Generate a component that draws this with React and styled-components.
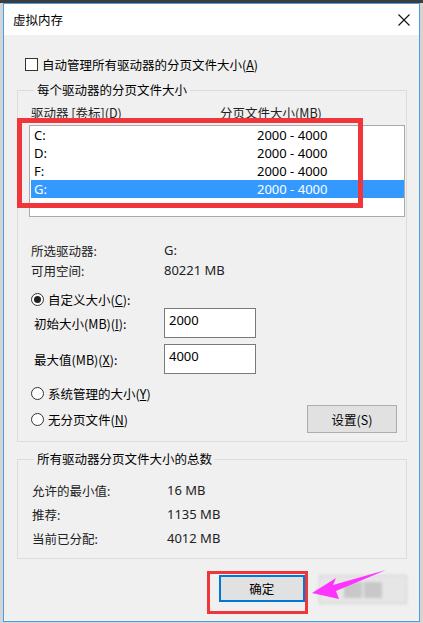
import React from 'react'
import styled, { createGlobalStyle } from 'styled-components'

const Global = createGlobalStyle`
  html, body {
    margin: 0;
    padding: 0;
    background: #d4d4d4;
  }
  body {
    font-family: "Noto Sans", "Noto Sans CJK SC", sans-serif;
    font-size: 12.5px;
    color: #000;
  }
`

const Screen = styled.div`
  width: 423px;
  height: 623px;
  box-sizing: border-box;
  border-top: 3px solid #3d3d3d;
  padding: 0 3px 0 3px;
  background: #d4d4d4;
`

const Window = styled.div`
  position: relative;
  width: 417px;
  height: 619px;
  box-sizing: border-box;
  border: 1px solid #4a9ee3;
  background: #f0f0f0;
  display: flex;
  flex-direction: column;
  overflow: hidden;
`

const TitleBar = styled.div`
  height: 31px;
  background: #fff;
  display: flex;
  align-items: center;
  justify-content: space-between;
  padding: 0 9px 0 9px;
  font-family: "Noto Sans CJK SC", sans-serif;
`

const Body = styled.div`
  flex: 1;
  padding: 21px 12px 0 13px;
  display: flex;
  flex-direction: column;
`

const CheckRow = styled.label`
  display: flex;
  align-items: center;
  height: 16px;
  padding-left: 8px;
  gap: 4px;
  font-family: "Noto Sans CJK SC", sans-serif;
`

const CheckBox = styled.span`
  width: 11px;
  height: 11px;
  border: 1px solid #333;
  background: #fff;
`

const Group = styled.fieldset`
  margin: ${(p) => p.$top}px 0 0 0;
  padding: ${(p) => p.$pt}px 1px ${(p) => p.$pb}px 11px;
  border: 1px solid #dcdcdc;
  min-width: 0;
`

const Legend = styled.legend`
  padding: 0 3px;
  margin-left: 5px;
  line-height: 16px;
  font-family: "Noto Sans CJK SC", sans-serif;
`

const HeaderRow = styled.div`
  display: grid;
  grid-template-columns: 189px auto;
  height: 16px;
  line-height: 16px;
  padding-left: 2px;
  color: #222;
  font-family: "Noto Sans CJK SC", sans-serif;
`

const ListBox = styled.div`
  margin-top: 4px;
  height: 92px;
  box-sizing: border-box;
  border: 1px solid #a9a9a9;
  background: #fff;
`

const ListRow = styled.div`
  display: grid;
  grid-template-columns: 223px auto;
  height: 18px;
  line-height: 18px;
  padding-left: 3px;
  margin-left: 1px;
  font-size: 13px;
  background: ${(p) => (p.$selected ? '#3399ff' : 'transparent')};
  color: ${(p) => (p.$selected ? '#fff' : '#000')};
`

const InfoRow = styled.div`
  display: grid;
  grid-template-columns: ${(p) => p.$col}px auto;
  height: ${(p) => p.$h}px;
  align-items: center;
  padding-left: ${(p) => p.$indent}px;
  margin-top: ${(p) => p.$top || 0}px;
  font-family: "Noto Sans", "Noto Sans CJK SC", sans-serif;
  color: #222;
`

const Num = styled.span`
  font-size: 13px;
`

const RadioRow = styled.label`
  display: flex;
  align-items: center;
  gap: 4px;
  height: 18px;
  padding-left: 2px;
  margin-top: ${(p) => p.$top || 0}px;
  font-family: "Noto Sans CJK SC", sans-serif;
`

const Radio = styled.span`
  width: 11px;
  height: 11px;
  border-radius: 50%;
  border: 1px solid #333;
  background: #fff;
  display: flex;
  align-items: center;
  justify-content: center;

  &::after {
    content: '';
    width: 7px;
    height: 7px;
    border-radius: 50%;
    background: ${(p) => (p.$checked ? '#222' : 'transparent')};
  }
`

const FieldRow = styled.div`
  display: grid;
  grid-template-columns: 130px 92px;
  align-items: center;
  height: 30px;
  padding-left: 5px;
  margin-top: ${(p) => p.$top || 0}px;
  font-family: "Noto Sans CJK SC", sans-serif;
`

const TextBox = styled.div`
  height: 30px;
  box-sizing: border-box;
  border: 1px solid #7a7a7a;
  background: #fff;
  padding: 3px 0 0 4px;
  line-height: 16px;
  font-size: 13px;
  font-family: "Noto Sans", sans-serif;
`

const LastRow = styled.div`
  display: flex;
  align-items: center;
  justify-content: space-between;
  height: 28px;
  margin-top: 3px;
  padding-right: 8px;
`

const Button = styled.button`
  width: ${(p) => p.$w}px;
  height: ${(p) => p.$h}px;
  box-sizing: border-box;
  background: #e1e1e1;
  border: ${(p) => (p.$focus ? '2px solid #0078d7' : '1px solid #adadad')};
  font-family: "Noto Sans CJK SC", sans-serif;
  font-size: 12.5px;
  color: #000;
  padding: 0;
`

const Footer = styled.div`
  display: flex;
  gap: 14px;
  margin-top: 16px;
  padding-left: 202px;
`

const BlurButton = styled.div`
  width: 88px;
  height: 27px;
  background: #e6e6e6;
  border: 1px solid #cfcfcf;
  filter: blur(1.5px);
  display: flex;
  align-items: center;
  justify-content: center;
`

const Smudge = styled.span`
  width: 18px;
  height: 16px;
  background: #c8c8c8;
  margin-left: ${(p) => p.$ml || 0}px;
`

const Highlight = styled.div`
  position: absolute;
  left: ${(p) => p.$x}px;
  top: ${(p) => p.$y}px;
  width: ${(p) => p.$w}px;
  height: ${(p) => p.$h}px;
  box-sizing: border-box;
  border: ${(p) => p.$b}px solid #f0353b;
  pointer-events: none;
`

const Arrow = styled.svg`
  position: absolute;
  left: 302px;
  top: 560px;
`

const u = (c) => <span style={{ textDecoration: 'underline' }}>{c}</span>

const drives = ['C:', 'D:', 'F:', 'G:']

export default function App() {
  return (
    <>
      <Global />
      <Screen>
        <Window>
          <TitleBar>
            <span>虚拟内存</span>
            <svg width="12" height="12" viewBox="0 0 12 12">
              <path d="M0.5 0.5 L11.5 11.5 M11.5 0.5 L0.5 11.5" stroke="#111" strokeWidth="1.1" />
            </svg>
          </TitleBar>
          <Body>
            <CheckRow>
              <CheckBox />
              <span>自动管理所有驱动器的分页文件大小({u('A')})</span>
            </CheckRow>

            <Group $top={10} $pt={7} $pb={8}>
              <Legend>每个驱动器的分页文件大小</Legend>
              <HeaderRow>
                <span>驱动器 [卷标](D)</span>
                <span>分页文件大小(MB)</span>
              </HeaderRow>
              <ListBox>
                {drives.map((d) => (
                  <ListRow key={d} $selected={d === 'G:'}>
                    <span>{d}</span>
                    <span>2000 - 4000</span>
                  </ListRow>
                ))}
              </ListBox>

              <InfoRow $col={133} $h={20} $indent={2} $top={23}>
                <span>所选驱动器:</span>
                <Num>G:</Num>
              </InfoRow>
              <InfoRow $col={133} $h={20} $indent={2}>
                <span>可用空间:</span>
                <Num>80221 MB</Num>
              </InfoRow>

              <RadioRow $top={10}>
                <Radio $checked />
                <span>自定义大小({u('C')}):</span>
              </RadioRow>
              <FieldRow>
                <span>初始大小(MB)({u('I')}):</span>
                <TextBox>2000</TextBox>
              </FieldRow>
              <FieldRow $top={6}>
                <span>最大值(MB)({u('X')}):</span>
                <TextBox>4000</TextBox>
              </FieldRow>

              <RadioRow $top={10}>
                <Radio />
                <span>系统管理的大小({u('Y')})</span>
              </RadioRow>
              <LastRow>
                <RadioRow>
                  <Radio />
                  <span>无分页文件({u('N')})</span>
                </RadioRow>
                <Button $w={90} $h={28}>设置(S)</Button>
              </LastRow>
            </Group>

            <Group $top={9} $pt={11} $pb={8}>
              <Legend>所有驱动器分页文件大小的总数</Legend>
              <InfoRow $col={135} $h={24} $indent={3}>
                <span>允许的最小值:</span>
                <Num>16 MB</Num>
              </InfoRow>
              <InfoRow $col={135} $h={24} $indent={3}>
                <span>推荐:</span>
                <Num>1135 MB</Num>
              </InfoRow>
              <InfoRow $col={135} $h={24} $indent={3}>
                <span>当前已分配:</span>
                <Num>4012 MB</Num>
              </InfoRow>
            </Group>

            <Footer>
              <Button $w={87} $h={27} $focus>确定</Button>
              <BlurButton>
                <Smudge />
                <Smudge $ml={2} />
              </BlurButton>
            </Footer>
          </Body>

          <Highlight $x={13} $y={114} $w={346} $h={90} $b={5} />
          <Highlight $x={203} $y={567} $w={101} $h={43} $b={3} />
          <Arrow width="84" height="40" viewBox="0 0 84 40">
            <polygon
              points="6,29 30,14 27,21 80,6 30,27 33,35"
              fill="#ff33ff"
            />
          </Arrow>
        </Window>
      </Screen>
    </>
  )
}
